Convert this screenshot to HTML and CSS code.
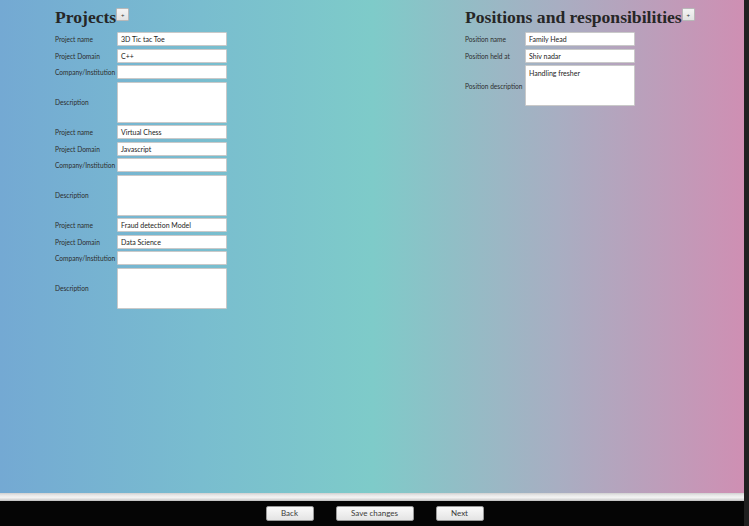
FILE: index.html
```html
<!DOCTYPE html>
<html>
<head>
<meta charset="utf-8">
<link rel="stylesheet" href="styles.css">
</head>
<body>
<div class="window">
  <div class="app">
    <main class="content">
      <section class="col col-projects">
        <div class="head">
          <h2 class="title">Projects</h2>
          <button class="add">+</button>
        </div>
        <div class="form">
          <label>Project name</label><div class="input">3D Tic tac Toe</div>
          <label>Project Domain</label><div class="input">C++</div>
          <label>Company/Institution</label><div class="input"></div>
          <label>Description</label><div class="input area"></div>

          <label>Project name</label><div class="input">Virtual Chess</div>
          <label>Project Domain</label><div class="input">Javascript</div>
          <label>Company/Institution</label><div class="input"></div>
          <label>Description</label><div class="input area"></div>

          <label>Project name</label><div class="input">Fraud detection Model</div>
          <label>Project Domain</label><div class="input">Data Science</div>
          <label>Company/Institution</label><div class="input"></div>
          <label>Description</label><div class="input area"></div>
        </div>
      </section>
      <section class="col col-positions">
        <div class="head">
          <h2 class="title">Positions and responsibilities</h2>
          <button class="add">+</button>
        </div>
        <div class="form form-pos">
          <label>Position name</label><div class="input">Family Head</div>
          <label>Position held at</label><div class="input">Shiv nadar</div>
          <label>Position description</label><div class="input area">Handling fresher</div>
        </div>
      </section>
    </main>
    <div class="divider"></div>
    <footer class="footer">
      <button class="btn btn-sm">Back</button>
      <button class="btn btn-lg">Save changes</button>
      <button class="btn btn-sm">Next</button>
    </footer>
  </div>
  <div class="edge"></div>
</div>
</body>
</html>
```

FILE: styles.css
```css
html, body {
  margin: 0;
  padding: 0;
  width: 749px;
  height: 526px;
  overflow: hidden;
  background: #1e1e1e;
}

.window {
  display: flex;
  width: 749px;
  height: 526px;
}

.app {
  width: 744px;
  height: 526px;
  display: flex;
  flex-direction: column;
}

.edge {
  flex: 1;
  background: #1f1f1f;
}

.content {
  height: 493px;
  display: flex;
  padding: 7px 0 0 55px;
  box-sizing: border-box;
  background: linear-gradient(to right, #74a9d3 0%, #79bdcf 27%, #7ecbc9 50%, #a8aec2 75%, #cf8fb3 100%);
  font-family: Lato, "Open Sans", sans-serif;
}

.col-projects {
  width: 410px;
}

.head {
  display: flex;
  align-items: flex-start;
  height: 20px;
}

.title {
  margin: 0;
  font-family: "Liberation Serif", "Times New Roman", serif;
  font-weight: bold;
  font-size: 17.6px;
  line-height: 20px;
  color: #262626;
}

.add {
  margin: 1px 0 0 0;
  width: 13px;
  height: 13px;
  padding: 0;
  border: 1px solid #b8b8b8;
  border-radius: 1px;
  background: linear-gradient(#f4f4f4, #e2e2e2);
  font-size: 6px;
  line-height: 10px;
  color: #333;
  font-family: "Liberation Sans", sans-serif;
}

.form {
  margin-top: 5px;
  display: grid;
  grid-template-columns: 62px 110px;
  row-gap: 2.5px;
  align-items: center;
}

.form-pos {
  grid-template-columns: 60px 110px;
}

.form label {
  font-size: 6.6px;
  color: #2d2d2d;
  white-space: nowrap;
}

.input {
  height: 14px;
  box-sizing: border-box;
  background: #fff;
  border: 1px solid #c9c9c9;
  border-radius: 1px;
  padding: 0 3px;
  font-size: 7px;
  line-height: 12px;
  color: #222;
}

.input.area {
  height: 41px;
  padding-top: 1px;
}

.divider {
  height: 8px;
  background: linear-gradient(#cfcfcf 0%, #e6e6e6 25%, #f3f3f3 55%, #dadada 80%, #bdbdbd 100%);
}

.footer {
  flex: 1;
  background: #050505;
  display: flex;
  justify-content: center;
  align-items: flex-start;
  gap: 22px;
  padding: 5px 0 0 5px;
}

.btn {
  height: 15px;
  padding: 0;
  border: 1px solid #9a9a9a;
  border-radius: 2px;
  background: linear-gradient(#fafafa, #e4e4e4);
  font-family: Lato, "Open Sans", sans-serif;
  font-size: 8px;
  line-height: 13px;
  color: #3a3a3a;
}

.btn-sm { width: 48px; }
.btn-lg { width: 78px; }
```
